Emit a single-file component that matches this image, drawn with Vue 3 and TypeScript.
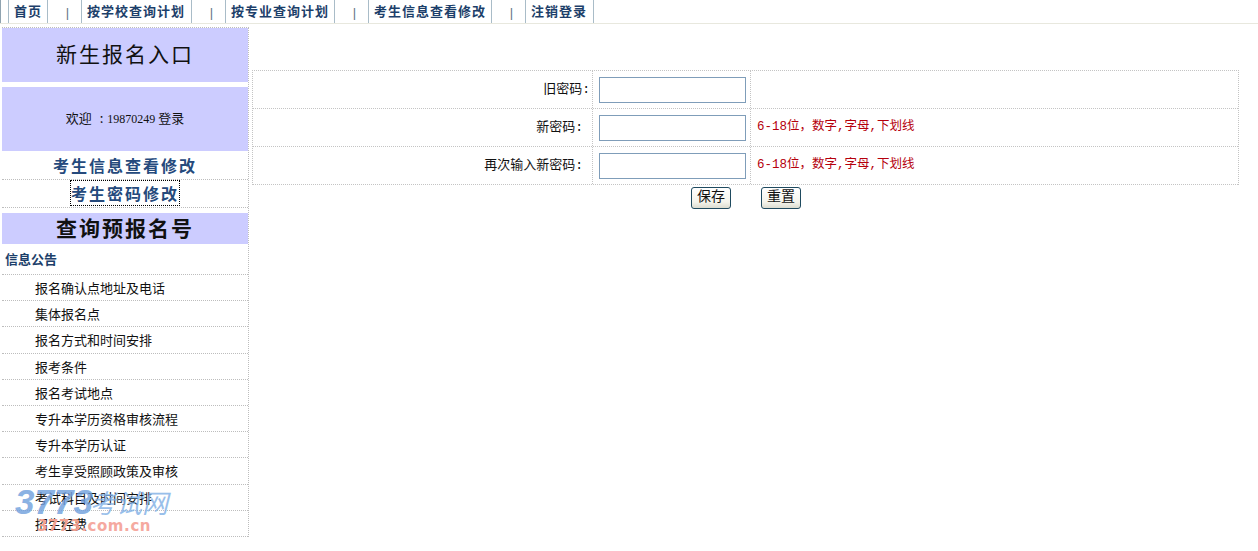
<script setup lang="ts">
const navItems = [
  { label: '首页', width: 40 },
  { label: '按学校查询计划', width: 111 },
  { label: '按专业查询计划', width: 110 },
  { label: '考生信息查看修改', width: 124 },
  { label: '注销登录', width: 69 },
]
const notices = [
  '报名确认点地址及电话', '集体报名点', '报名方式和时间安排', '报考条件', '报名考试地点',
  '专升本学历资格审核流程', '专升本学历认证', '考生享受照顾政策及审核', '考试科目及时间安排', '招生经费',
]
const fields = [
  { label: '旧密码:', hint: '', cls: 'wide' },
  { label: '新密码:', hint: '6-18位，数字,字母,下划线', cls: '' },
  { label: '再次输入新密码:', hint: '6-18位，数字,字母,下划线', cls: '' },
]
</script>

<template>
  <div class="page">
    <nav class="nav">
      <template v-for="(item, i) in navItems" :key="item.label">
        <a class="nav-item" :style="{ width: item.width + 'px' }">{{ item.label }}</a>
        <span v-if="i < navItems.length - 1" class="nav-sep">|</span>
      </template>
    </nav>
    <div class="body">
      <aside class="side">
        <div class="box title">新生报名入口</div>
        <div class="box welcome">欢迎 <span class="colon">:</span><span class="num">19870249</span> 登录</div>
        <div class="link one"><a>考生信息查看修改</a></div>
        <div class="link two"><a class="focused">考生密码修改</a></div>
        <div class="box query">查询预报名号</div>
        <div class="notice-head">信息公告</div>
        <div v-for="n in notices" :key="n" class="notice">{{ n }}</div>
      </aside>
      <main class="main">
        <div class="form">
          <div v-for="f in fields" :key="f.label" class="row">
            <div class="label" :class="f.cls">{{ f.label }}</div>
            <div class="field"><input class="input" type="text" /></div>
            <div class="hint">{{ f.hint }}</div>
          </div>
        </div>
        <div class="actions">
          <button class="btn" type="button">保存</button>
          <button class="btn" type="button">重置</button>
        </div>
      </main>
    </div>
    <div class="mark">
      <div class="mark-top"><span class="mark-num">3773</span><span class="mark-cn">考试网</span></div>
      <div class="mark-bottom"><span class="mark-red">3773</span>.com.cn</div>
    </div>
  </div>
</template>

<style>
html, body { background: #fff; overflow: hidden; }
</style>

<style scoped>
.page {
  position: relative;
  width: 1258px;
  height: 551px;
  overflow: hidden;
  font-family: "Liberation Serif", "Noto Sans CJK SC", serif;
  font-size: 13px;
  color: #111;
  background: #fff;
}
.nav {
  display: flex;
  height: 23px;
  padding-left: 8px;
  border-bottom: 1px solid #e8e8de;
  box-shadow: inset 1px 0 0 #8fa3b0;
}
.nav-item {
  box-sizing: border-box;
  height: 23px;
  border-left: 1px solid #a9bcc8;
  border-right: 1px solid #a9bcc8;
  padding-left: 5px;
  font: bold 13px/22px "Noto Sans CJK SC", sans-serif;
  letter-spacing: 1px;
  color: #1d3f6a;
  white-space: nowrap;
}
.nav-sep {
  box-sizing: border-box;
  width: 33px;
  padding-left: 6px;
  text-align: center;
  font: 13px/25px "Liberation Sans", sans-serif;
  color: #5f7484;
}
.body {
  display: grid;
  grid-template-columns: 249px 1fr;
  padding: 3px 0 0 2px;
}
.side {
  display: flex;
  flex-direction: column;
  width: 247px;
  box-sizing: border-box;
  border-right: 1px dotted #bdbdbd;
  border-top: 1px dotted #bdbdbd;
  height: 510px;
}
.box {
  background: #ccccff;
  text-align: center;
  font-family: "Noto Sans CJK SC", sans-serif;
  width: 246px;
  flex: none;
}
.title {
  height: 54px;
  line-height: 50px;
  font-size: 21px;
  letter-spacing: 2px;
  color: #111;
}
.welcome {
  height: 64px;
  margin-top: 5px;
  line-height: 62px;
  font-size: 13px;
}
.colon { margin: 0 3px 0 5px; }
.num { font-family: "Liberation Serif", serif; font-size: 12px; margin-left: 1px; }
.link {
  flex: none;
  box-sizing: border-box;
  text-align: center;
  font: bold 16px/28px "Noto Sans CJK SC", sans-serif;
  letter-spacing: 2px;
  color: #254a7c;
  border-bottom: 1px dotted #bdbdbd;
}
.link.one { height: 29px; }
.link.two { height: 28px; line-height: 27px; }
.focused { outline: 1px dotted #000; }
.query {
  height: 31px;
  margin-top: 5px;
  line-height: 28px;
  font-size: 21px;
  letter-spacing: 2px;
  font-weight: 700;
  color: #111;
}
.notice-head {
  flex: none;
  height: 31px;
  box-sizing: border-box;
  padding-left: 3px;
  font: bold 13px/30px "Noto Sans CJK SC", sans-serif;
  color: #1d3f6a;
  border-bottom: 1px dotted #bdbdbd;
}
.notice {
  flex: none;
  height: 26.2px;
  box-sizing: border-box;
  padding-left: 33px;
  font: 13px/25px "Noto Sans CJK SC", sans-serif;
  color: #111;
  border-bottom: 1px dotted #bdbdbd;
}
.main { padding: 43px 0 0 1px; }
.form {
  width: 987px;
  border-top: 1px dotted #c4c4c4;
  border-right: 1px dotted #c4c4c4;
  border-left: 1px dotted #c4c4c4;
  box-sizing: border-box;
}
.row {
  display: grid;
  grid-template-columns: 339px 159px 1fr;
  height: 38px;
  box-sizing: border-box;
  border-bottom: 1px dotted #c4c4c4;
}
.label {
  text-align: right;
  padding-right: 9px;
  line-height: 37px;
  font-family: "Liberation Mono", "Noto Sans CJK SC", monospace;
  color: #111;
}
.label.wide { padding-right: 2px; }
.field {
  border-left: 1px dotted #c4c4c4;
  border-right: 1px dotted #c4c4c4;
  padding: 6px 0 0 6px;
}
.input {
  display: block;
  box-sizing: border-box;
  width: 147px;
  height: 26px;
  padding: 0;
  border: 1px solid #7f9db9;
  background: #fff;
}
.hint {
  padding-left: 6px;
  line-height: 37px;
  font-family: "Liberation Mono", "Noto Sans CJK SC", monospace;
  font-size: 12.5px;
  color: #b5000c;
  white-space: nowrap;
}
.actions {
  display: flex;
  gap: 30px;
  padding: 2px 0 0 439px;
}
.btn {
  width: 40px;
  height: 22px;
  padding: 0 0 6px;
  border: 1px solid #1f4a5f;
  border-radius: 3px;
  background: linear-gradient(#fff, #f4f4ec 70%, #dcdcd0);
  font: 14px/15px "Noto Sans CJK SC", sans-serif;
  color: #111;
}
.mark {
  position: absolute;
  left: 15px;
  top: 487px;
  width: 160px;
  pointer-events: none;
}
.mark-top {
  display: flex;
  align-items: center;
  height: 30px;
  color: #6f9fdd;
  opacity: 0.8;
}
.mark-num {
  font: italic bold 35px/30px "Liberation Sans", sans-serif;
  width: 75px;
  white-space: nowrap;
}
.mark-cn {
  font: italic 26px/30px "Noto Sans CJK SC", sans-serif;
  color: #7fb0e6;
}
.mark-bottom {
  padding-left: 22px;
  font: bold 15px/18px "DejaVu Sans", sans-serif;
  letter-spacing: 0.6px;
  color: #f5a9a0;
}
.mark-red { color: #f0a090; }
</style>
